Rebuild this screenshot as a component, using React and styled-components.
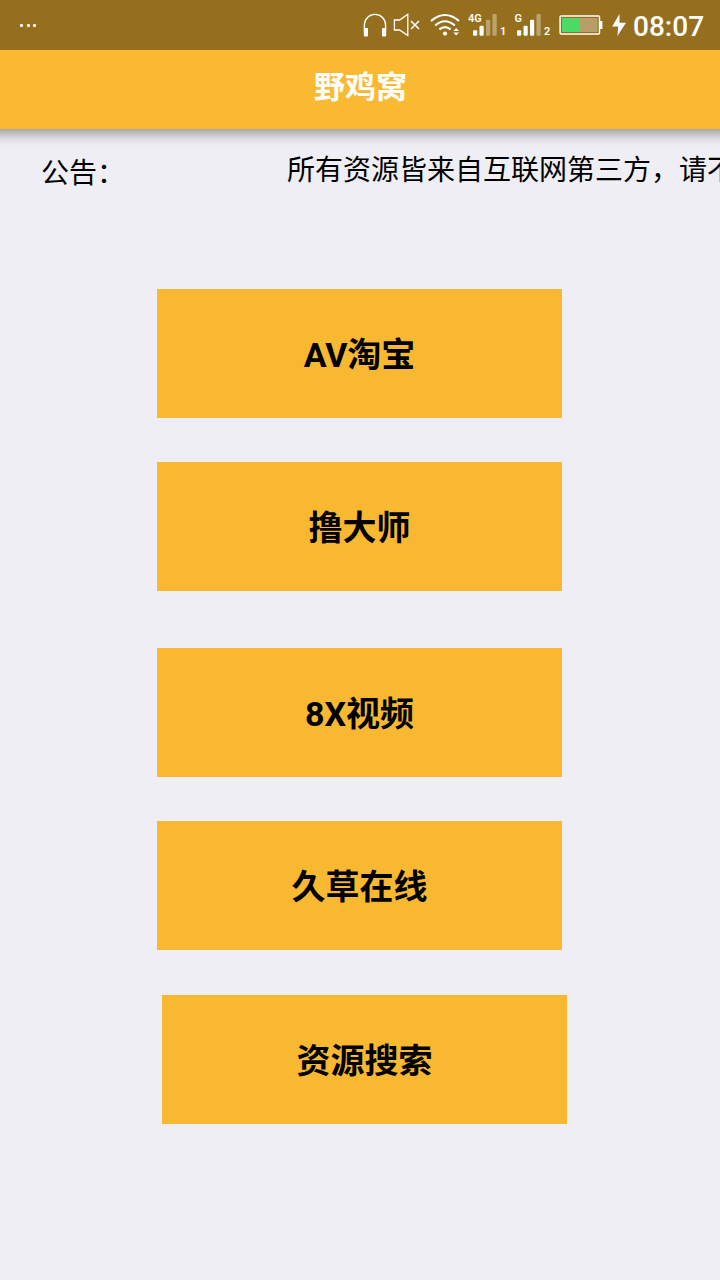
import React from "react";
import styled, { createGlobalStyle } from "styled-components";

const links = [
  { label: "AV淘宝" },
  { label: "撸大师", gap: 44 },
  { label: "8X视频", gap: 57 },
  { label: "久草在线", gap: 44 },
  { label: "资源搜索", gap: 45, shift: 5 },
];

const Headphones = () => (
  <Icon width="28" viewBox="362 0 28 50">
    <path d="M364.4 30V25a10.6 10.6 0 0 1 21.2 0V30" fill="none" stroke="#fff" strokeWidth="1.4" />
    <rect x="363.8" y="28" width="4.2" height="8.4" rx="1" fill="#fff" />
    <rect x="382" y="28" width="4.2" height="8.4" rx="1" fill="#fff" />
  </Icon>
);

const Muted = () => (
  <Icon width="38" viewBox="390 0 38 50">
    <path d="M394.4 20H399.6L407.8 14.2V35.6L399.6 30H394.4Z" fill="none" stroke="#fff" strokeWidth="1.3" />
    <path d="M411 21L419 29M419 21L411 29" stroke="#fff" strokeWidth="1.5" />
  </Icon>
);

const Wifi = () => (
  <Icon width="36" viewBox="428 0 36 50">
    <g fill="none" stroke="#fff" strokeWidth="2.1">
      <path d="M431 21Q445 9 459 21" />
      <path d="M435.2 25.5Q445 17 454.8 25.5" />
      <path d="M439.4 29.4Q445 24.8 450.6 29.4" />
    </g>
    <circle cx="445" cy="33.6" r="2.1" fill="#fff" />
    <path d="M453.4 31L456.2 28L459 31ZM453.4 32.6L456.2 35.6L459 32.6Z" fill="#fff" />
  </Icon>
);

const Signal = ({ type, sim, level, width, start }) => (
  <Icon width={width} viewBox={`0 0 ${width} 50`}>
    <SignalText x={type === "G" ? 4.5 : 4} y="22">
      {type}
    </SignalText>
    {[5.5, 10, 16, 21.7].map((height, i) => (
      <rect
        key={height}
        x={start + i * 6.5}
        y={35.8 - height}
        width="4.2"
        height={height}
        rx="1"
        fill="#fff"
        opacity={i < level ? 1 : 0.36}
      />
    ))}
    <SignalText x={start + 27} y="35.4">
      {sim}
    </SignalText>
  </Icon>
);

const Battery = () => (
  <Icon width="48" viewBox="558 0 48 50">
    <rect x="560.1" y="16" width="39.4" height="18" rx="1" fill="none" stroke="#fff" strokeWidth="1.5" />
    <rect x="562" y="18" width="18" height="14" fill="#4cdb64" />
    <rect x="580" y="18" width="17.6" height="14" fill="#b89e69" />
    <rect x="600" y="21" width="2.4" height="8" fill="#fff" />
  </Icon>
);

const Bolt = () => (
  <Icon width="26" viewBox="606 0 26 50">
    <path d="M619.4 14L612.2 26.6H618.2L617.4 36L626 22.8H619.6Z" fill="#fff" />
  </Icon>
);

const App = () => {
  return (
    <Screen>
      <GlobalStyle />
      <StatusBar>
        <Dots>
          <Dot />
          <Dot />
          <Dot />
        </Dots>
        <StatusIcons>
          <Headphones />
          <Muted />
          <Wifi />
          <Signal type="4G" sim="1" level={2} width={46} start={9} />
          <Signal type="G" sim="2" level={3} width={48} start={7} />
          <Battery />
          <Bolt />
          <Clock>08:07</Clock>
        </StatusIcons>
      </StatusBar>

      <Header>
        <Title>野鸡窝</Title>
      </Header>

      <Notice>
        <NoticeLabel>公告：</NoticeLabel>
        <NoticeText>所有资源皆来自互联网第三方，请不</NoticeText>
      </Notice>

      <Menu>
        {links.map((link) => (
          <MenuButton key={link.label} $gap={link.gap} $shift={link.shift}>
            {link.label}
          </MenuButton>
        ))}
      </Menu>
    </Screen>
  );
};

export default App;

const GlobalStyle = createGlobalStyle`
  * {
    box-sizing: border-box;
  }

  body {
    margin: 0;
    background-color: #efeef4;
    font-family: Roboto, "Noto Sans CJK SC", sans-serif;
  }
`;

const Screen = styled.div`
  width: 720px;
  height: 1280px;
  overflow: hidden;
  background-color: #efeef4;
  color: #000;
`;

const StatusBar = styled.div`
  height: 50px;
  background-color: #956f1e;
  color: white;
  display: flex;
  align-items: center;
  justify-content: space-between;
  padding: 0 0 0 20px;
`;

const Dots = styled.div`
  display: flex;
  gap: 3.5px;
`;

const Dot = styled.span`
  width: 3px;
  height: 3px;
  border-radius: 1px;
  background-color: white;
`;

const StatusIcons = styled.div`
  display: flex;
  align-items: center;
  width: 358px;
`;

const Icon = styled.svg`
  height: 50px;
  flex-shrink: 0;
`;

const SignalText = styled.text`
  fill: white;
  font-family: Roboto, sans-serif;
  font-size: 11px;
  font-weight: 600;
`;

const Clock = styled.div`
  font-size: 28px;
  line-height: 50px;
  font-weight: 500;
  padding: 3px 0 0 1px;
`;

const Header = styled.header`
  height: 79px;
  background-color: #fab932;
  display: flex;
  justify-content: center;
`;

const Title = styled.h1`
  margin: 0;
  padding: 2px 0 0 1px;
  color: white;
  font-size: 31px;
  line-height: 72px;
  font-weight: 700;
`;

// the header's shadow falls on the top of this row
const Notice = styled.div`
  height: 160px;
  display: flex;
  padding: 22px 0 0 41px;
  background: linear-gradient(#a8a8ab 0, #c4c3c8 5px, #dddce1 10px, #ebeaf0 15px, #efeef4 20px);
  font-size: 28px;
  line-height: 40px;
  white-space: nowrap;
`;

const NoticeLabel = styled.div`
  width: 246px;
  flex-shrink: 0;
  padding-top: 3px;
`;

const NoticeText = styled.div`
  flex: 1;
  overflow: hidden;
`;

const Menu = styled.div`
  display: flex;
  flex-direction: column;
  padding-left: 157px;
`;

const MenuButton = styled.button`
  width: 405px;
  height: 129px;
  margin: ${({ $gap = 0 }) => $gap}px 0 0 ${({ $shift = 0 }) => $shift}px;
  padding: 0 0 2px;
  border: none;
  background-color: #f8b831;
  color: #000;
  font-family: inherit;
  font-size: 34px;
  font-weight: 700;
`;
